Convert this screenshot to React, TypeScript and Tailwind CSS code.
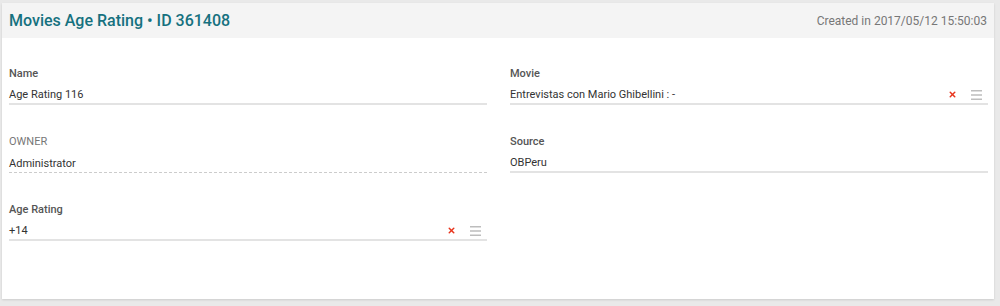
import { X } from 'lucide-react'

type FieldProps = {
  label: string
  value: string
  caps?: boolean
  dashed?: boolean
  actions?: boolean
}

function Field({ label, value, caps, dashed, actions }: FieldProps) {
  return (
    <div className="h-[68px]">
      <div
        className={
          caps
            ? 'text-[11px] leading-[14px] text-[#777] uppercase'
            : 'text-[11px] leading-[14px] font-medium text-[#555]'
        }
      >
        {label}
      </div>
      <div
        className={
          'mt-[5px] flex h-[19px] items-center text-[11px] text-[#333] ' +
          (dashed ? 'border-b border-dashed border-[#ccc]' : 'border-b-2 border-[#e3e3e3]')
        }
      >
        <span className="flex-1 leading-[17px]">{value}</span>
        {actions && (
          <div className="flex items-center gap-[14px] pr-[6px]">
            <X className="h-[9px] w-[9px] text-[#e8341c]" strokeWidth={4} />
            <svg width="11" height="10" viewBox="0 0 11 10" className="text-[#bdbdbd]">
              <rect x="0" y="0" width="11" height="1.5" fill="currentColor" />
              <rect x="0" y="4.25" width="11" height="1.5" fill="currentColor" />
              <rect x="0" y="8.5" width="11" height="1.5" fill="currentColor" />
            </svg>
          </div>
        )}
      </div>
    </div>
  )
}

export default function App() {
  return (
    <div className="h-[306px] w-[1000px] bg-[#e9e9e9] pt-[3px] pl-[2px] font-['Roboto',sans-serif]">
      <div className="h-[296px] w-[992px] bg-white shadow-[0_1px_2px_rgba(0,0,0,0.12)]">
        {/* Header */}
        <div className="flex h-[35px] items-center justify-between bg-[#f4f4f4] px-[7px]">
          <h1 className="text-[16px] font-medium text-[#16717f]">Movies Age Rating • ID 361408</h1>
          <span className="text-[12px] text-[#777]">Created in 2017/05/12 15:50:03</span>
        </div>

        {/* Form */}
        <div className="grid grid-cols-2 gap-x-[23px] px-[7px] pt-[29px] pr-[6px]">
          <div>
            <Field label="Name" value="Age Rating 116" />
            <Field label="Owner" value="Administrator" caps dashed />
            <Field label="Age Rating" value="+14" actions />
          </div>
          <div>
            <Field label="Movie" value="Entrevistas con Mario Ghibellini : -" actions />
            <Field label="Source" value="OBPeru" />
          </div>
        </div>
      </div>
    </div>
  )
}
